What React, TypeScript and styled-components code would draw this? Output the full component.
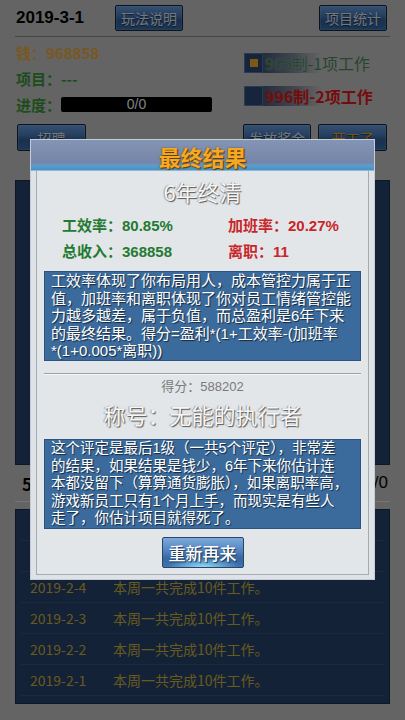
import React from "react";
import styled, { createGlobalStyle } from "styled-components";

const GlobalStyle = createGlobalStyle`
  html, body { margin: 0; padding: 0; }
  body {
    background: #c8c8c8;
    font-family: "Noto Sans CJK SC", "Noto Sans", sans-serif;
  }
  * { box-sizing: border-box; }
`;

const Page = styled.div`
  position: relative;
  width: 405px;
  height: 720px;
  overflow: hidden;
  background: #c8c8c8;
`;

const TopBar = styled.div`
  display: grid;
  grid-template-columns: 99px 68px 1fr 68px;
  align-items: center;
  height: 37px;
  margin: 0 15px;
  padding: 5px 3px 5px 1px;
  border-bottom: 1px solid #8a8a8a;
`;

const DateText = styled.div`
  font-family: "Liberation Sans", Arial, sans-serif;
  font-weight: 700;
  font-size: 17px;
  color: #000;
`;

const GameButton = styled.button<{ $w: number; $h?: number; $tone?: "light" | "orange" }>`
  width: ${(p) => p.$w}px;
  height: ${(p) => p.$h ?? 26}px;
  padding: 0;
  border: 1px solid #142640;
  border-radius: 2px;
  background: linear-gradient(to bottom, #6aa0e2 0%, #4a7fc0 40%, #33609c 60%, #3a70b0 100%);
  box-shadow: inset 0 0 0 1px rgba(255, 255, 255, 0.12);
  color: ${(p) => (p.$tone === "orange" ? "#ffa51d" : "#e6f0ff")};
  font-family: "Noto Sans CJK SC", sans-serif;
  font-size: 14px;
  line-height: 1;
  text-shadow: 0 1px 1px rgba(0, 0, 0, 0.6);
`;

const InfoSection = styled.div`
  display: flex;
  margin-top: 2px;
  padding-left: 16px;
`;

const InfoCol = styled.div`
  display: flex;
  flex-direction: column;
  width: 228px;
`;

const InfoRow = styled.div<{ $c: string }>`
  display: flex;
  align-items: center;
  height: 26px;
  font-size: 15px;
  font-weight: 700;
  color: ${(p) => p.$c};
`;

const Progress = styled.div`
  width: 151px;
  height: 15px;
  background: #000;
  border-radius: 2px;
  color: #fff;
  font-family: "Liberation Sans", sans-serif;
  font-weight: 400;
  font-size: 14px;
  line-height: 15px;
  text-align: center;
`;

const CheckCol = styled.div`
  display: flex;
  flex-direction: column;
  gap: 13px;
  padding-top: 14px;
`;

const CheckRow = styled.div`
  display: flex;
  align-items: center;
  height: 20px;
`;

const CheckBox = styled.div<{ $on?: boolean }>`
  display: flex;
  align-items: center;
  justify-content: center;
  width: 19px;
  height: 20px;
  background: #2e4a78;
  border: 1px solid #5674a4;
  &::after {
    content: "";
    display: ${(p) => (p.$on ? "block" : "none")};
    width: 8px;
    height: 8px;
    background: #ffb030;
  }
`;

const CheckLabel = styled.span<{ $red?: boolean }>`
  padding-left: 2px;
  font-size: 16px;
  line-height: 20px;
  white-space: nowrap;
  font-weight: ${(p) => (p.$red ? 700 : 400)};
  color: ${(p) => (p.$red ? "#e81818" : "#4f8a58")};
  text-shadow: ${(p) => (p.$red ? "none" : "0 0 1px rgba(200,220,230,0.7)")};
  background: linear-gradient(to right, rgba(44, 70, 112, 0.85) 0%, rgba(44, 70, 112, 0.45) 55%, rgba(44, 70, 112, 0) 100%);
  background-size: 58px 100%;
  background-repeat: no-repeat;
`;

const ActionRow = styled.div`
  display: flex;
  gap: 7px;
  margin-top: 7px;
  padding: 0 18px 0 17px;
`;

const Spacer = styled.div`
  flex: 1;
`;

const NavyPanel = styled.div<{ $h: number }>`
  height: ${(p) => p.$h}px;
  margin: 0 15px;
  background: #26446f;
  border: 1px solid #1a2f52;
`;

const TopPanel = styled(NavyPanel)`
  margin-top: 29px;
`;

const StatusRow = styled.div`
  display: flex;
  align-items: center;
  justify-content: space-between;
  height: 37px;
  margin: 0 15px;
  padding: 0 2px 0 7px;
  border-bottom: 1px solid #e8e8e8;
  font-size: 17px;
  font-weight: 700;
  color: #000;
`;

const StatusNum = styled.span`
  font-family: "Liberation Sans", sans-serif;
  font-weight: 400;
`;

const ListPanel = styled(NavyPanel)`
  margin-top: 7px;
  overflow: hidden;
  padding: 0 5px;
`;

const LogRow = styled.div`
  display: flex;
  align-items: center;
  height: 31px;
  padding-left: 9px;
  border-bottom: 1px solid #36547f;
  font-size: 14px;
  color: #d2b43a;
  white-space: nowrap;
`;

const LogDate = styled.span`
  width: 83px;
`;

const Dim = styled.div`
  position: absolute;
  top: 0;
  left: 0;
  width: 405px;
  height: 720px;
  z-index: 5;
  background-color: rgba(0, 0, 0, 0.5);
`;

const Modal = styled.div`
  position: absolute;
  left: 30px;
  top: 139px;
  z-index: 10;
  width: 345px;
  height: 441px;
  display: flex;
  flex-direction: column;
  background: #dfe3e7;
  border: 1px solid #c4ccd6;
  padding: 0 5px 5px;
`;

const ModalHeader = styled.div`
  height: 31px;
  margin: 0 -5px;
  display: flex;
  align-items: center;
  justify-content: center;
  padding-top: 1px;
  background: linear-gradient(to bottom, #8494b4 0%, #7686a9 72%, #5d9ccb 82%, #4a92c6 96%, #b8d4e8 100%);
`;

const ModalTitle = styled.div`
  font-size: 22px;
  font-weight: 700;
  color: #f7a823;
  text-shadow: 1px 1px 1px #5a3a00, 0 0 2px rgba(80, 50, 0, 0.6);
`;

const InnerPanel = styled.div`
  flex: 1;
  display: flex;
  flex-direction: column;
  align-items: stretch;
  background: #e3e6e8;
  border: 1px solid #a3abb3;
  border-top: none;
  padding: 0 7px 6px;
`;

const Embossed = styled.div<{ $h: number }>`
  height: ${(p) => p.$h}px;
  line-height: ${(p) => p.$h}px;
  text-align: center;
  font-size: 22px;
  color: #f6f6f6;
  text-shadow: 1px 1px 1px #555, -1px 0 1px rgba(90, 90, 90, 0.5);
`;

const Stats = styled.div`
  display: grid;
  grid-template-columns: 166px 1fr;
  grid-auto-rows: 26px;
  align-items: center;
  padding-left: 18px;
  margin-bottom: 8px;
`;

const Stat = styled.div<{ $red?: boolean }>`
  font-family: "Liberation Sans", "Noto Sans CJK SC", sans-serif;
  font-size: 15px;
  font-weight: 700;
  white-space: nowrap;
  color: ${(p) => (p.$red ? "#c8262a" : "#237a32")};
`;

const NoteBox = styled.div<{ $fs: number }>`
  height: 90px;
  padding: 0 4px 0 6px;
  background: #3b6b9c;
  border: 1px solid #2c5482;
  color: #fff;
  font-family: "Liberation Sans", "Noto Sans CJK SC", sans-serif;
  font-size: ${(p) => p.$fs}px;
  line-height: 17.5px;
  white-space: nowrap;
  text-shadow: 1px 1px 1px #14263c;
  overflow: hidden;
`;

const Divider = styled.div`
  height: 1px;
  margin-top: 12px;
  background: #9aa0a6;
  box-shadow: 0 1px 0 #f4f6f7;
`;

const Score = styled.div`
  height: 26px;
  line-height: 26px;
  text-align: center;
  font-family: "Liberation Sans", "Noto Sans CJK SC", sans-serif;
  font-size: 13px;
  color: #7a7a7a;
`;

const Box2 = styled(NoteBox)`
  margin-top: 11px;
`;

const ButtonWrap = styled.div`
  display: flex;
  justify-content: center;
  margin-top: 8px;
`;

const RetryButton = styled.button`
  width: 82px;
  height: 31px;
  padding: 0;
  border: 1px solid #2a4466;
  border-radius: 2px;
  background:
    radial-gradient(ellipse 45% 35% at 50% 100%, rgba(150, 225, 255, 0.95), rgba(150, 225, 255, 0) 100%),
    linear-gradient(to bottom, #7eaada 0%, #4f82bf 45%, #36679f 70%, #3c73b3 100%);
  color: #fff;
  font-family: "Noto Sans CJK SC", sans-serif;
  font-size: 17px;
  font-weight: 500;
  line-height: 1;
  text-shadow: 1px 1px 1px #1d3553;
`;

const logs = ["2019-2-6", "2019-2-5", "2019-2-4", "2019-2-3", "2019-2-2", "2019-2-1", "2019-1-4"];

export default function App() {
  return (
    <>
      <GlobalStyle />
      <Page>
        <TopBar>
          <DateText>2019-3-1</DateText>
          <GameButton $w={68}>玩法说明</GameButton>
          <Spacer />
          <GameButton $w={68}>项目统计</GameButton>
        </TopBar>
        <InfoSection>
          <InfoCol>
            <InfoRow $c="#f0b040">钱：968858</InfoRow>
            <InfoRow $c="#3a9a3a">项目：---</InfoRow>
            <InfoRow $c="#3a9a3a">
              进度：<Progress>0/0</Progress>
            </InfoRow>
          </InfoCol>
          <CheckCol>
            <CheckRow>
              <CheckBox $on />
              <CheckLabel>965制-1项工作</CheckLabel>
            </CheckRow>
            <CheckRow>
              <CheckBox />
              <CheckLabel $red>996制-2项工作</CheckLabel>
            </CheckRow>
          </CheckCol>
        </InfoSection>
        <ActionRow>
          <GameButton $w={69} $h={27}>招聘</GameButton>
          <Spacer />
          <GameButton $w={68} $h={27}>发放奖金</GameButton>
          <GameButton $w={69} $h={27} $tone="orange">开工了</GameButton>
        </ActionRow>
        <TopPanel $h={285} />
        <StatusRow>
          <span>5人</span>
          <StatusNum>0/0</StatusNum>
        </StatusRow>
        <ListPanel $h={195}>
          {logs.map((d) => (
            <LogRow key={d}>
              <LogDate>{d}</LogDate>
              <span>本周一共完成10件工作。</span>
            </LogRow>
          ))}
        </ListPanel>
        <Dim />
        <Modal>
          <ModalHeader>
            <ModalTitle>最终结果</ModalTitle>
          </ModalHeader>
          <InnerPanel>
            <Embossed $h={40}>6年终清</Embossed>
            <Stats>
              <Stat>工效率：80.85%</Stat>
              <Stat $red>加班率：20.27%</Stat>
              <Stat>总收入：368858</Stat>
              <Stat $red>离职：11</Stat>
            </Stats>
            <NoteBox $fs={15}>
              工效率体现了你布局用人，成本管控力属于正
              <br />
              值，加班率和离职体现了你对员工情绪管控能
              <br />
              力越多越差，属于负值，而总盈利是6年下来
              <br />
              的最终结果。得分=盈利*(1+工效率-(加班率
              <br />
              *(1+0.005*离职))
            </NoteBox>
            <Divider />
            <Score>得分：588202</Score>
            <Embossed $h={28}>称号：无能的执行者</Embossed>
            <Box2 $fs={14.5}>
              这个评定是最后1级（一共5个评定），非常差
              <br />
              的结果，如果结果是钱少，6年下来你估计连
              <br />
              本都没留下（算算通货膨胀），如果离职率高，
              <br />
              游戏新员工只有1个月上手，而现实是有些人
              <br />
              走了，你估计项目就得死了。
            </Box2>
            <ButtonWrap>
              <RetryButton>重新再来</RetryButton>
            </ButtonWrap>
          </InnerPanel>
        </Modal>
      </Page>
    </>
  );
}
